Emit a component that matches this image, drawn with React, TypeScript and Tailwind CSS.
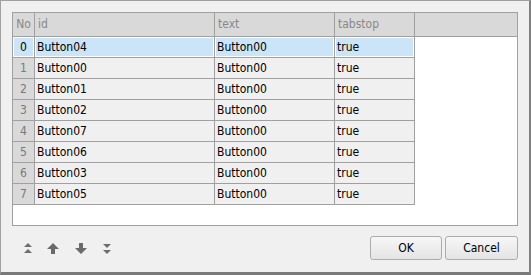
import React from "react";

const rows = [
  { no: 0, id: "Button04", text: "Button00", tab: "true", sel: true },
  { no: 1, id: "Button00", text: "Button00", tab: "true" },
  { no: 2, id: "Button01", text: "Button00", tab: "true" },
  { no: 3, id: "Button02", text: "Button00", tab: "true" },
  { no: 4, id: "Button07", text: "Button00", tab: "true" },
  { no: 5, id: "Button06", text: "Button00", tab: "true" },
  { no: 6, id: "Button03", text: "Button00", tab: "true" },
  { no: 7, id: "Button05", text: "Button00", tab: "true" },
];

const font = { fontFamily: '"DejaVu Sans Condensed", "DejaVu Sans", "Liberation Sans", sans-serif' };

function Row({ r }: { r: (typeof rows)[number] }) {
  const selCell = r.sel ? "bg-[#cce4f7] shadow-[inset_0_0_0_1px_#ffffff]" : "bg-[#f0f0f0]";
  return (
    <div className="flex h-[21px] text-[12px] leading-[20px]">
      <div
        className={`w-[22px] shrink-0 border-r border-b border-[#a0a0a0] text-center ${
          r.sel ? "bg-[#cce4f7] shadow-[inset_0_0_0_1px_#ffffff] text-black" : "bg-[#d9d9d9] text-[#7a7a7a]"
        }`}
      >
        {r.no}
      </div>
      <div className={`w-[180px] shrink-0 border-r border-b border-[#a0a0a0] pl-[2px] text-black ${selCell}`}>{r.id}</div>
      <div className={`w-[120px] shrink-0 border-r border-b border-[#a0a0a0] pl-[2px] text-black ${selCell}`}>{r.text}</div>
      <div className={`w-[80px] shrink-0 border-r border-b border-[#a0a0a0] pl-[2px] text-black ${selCell}`}>{r.tab}</div>
    </div>
  );
}

function Icon({ kind }: { kind: "top" | "up" | "down" | "bottom" }) {
  if (kind === "top")
    return (
      <svg width="10" height="11" viewBox="0 0 10 11">
        <polygon points="5,0 9,4 1,4" fill="#6e6e6e" />
        <polygon points="5,6 9,10 1,10" fill="#6e6e6e" />
      </svg>
    );
  if (kind === "bottom")
    return (
      <svg width="10" height="11" viewBox="0 0 10 11">
        <polygon points="1,1 9,1 5,5" fill="#6e6e6e" />
        <polygon points="1,7 9,7 5,11" fill="#6e6e6e" />
      </svg>
    );
  if (kind === "up")
    return (
      <svg width="12" height="11" viewBox="0 0 12 11">
        <polygon points="6,0 12,6 8,6 8,11 4,11 4,6 0,6" fill="#6a6a6a" />
      </svg>
    );
  return (
    <svg width="12" height="11" viewBox="0 0 12 11">
      <polygon points="4,0 8,0 8,5 12,5 6,11 0,5 4,5" fill="#6a6a6a" />
    </svg>
  );
}

export default function App() {
  return (
    <div
      style={font}
      className="w-[531px] h-[275px] bg-[#f0f0f0] border-l border-t border-[#a0a0a0] border-r-2 border-r-[#808080] border-b-[3px] border-b-[#7a7a7a] pt-[11px] pl-[11px] pr-[11px] flex flex-col"
    >
      <div className="w-[506px] h-[214px] border border-[#a0a0a0] bg-white flex flex-col">
        <div className="flex h-[24px] bg-[#d9d9d9] border-b border-[#a0a0a0] text-[12px] leading-[23px] text-[#888888]">
          <div className="w-[22px] shrink-0 border-r border-[#a0a0a0] text-center">No</div>
          <div className="w-[180px] shrink-0 border-r border-[#a0a0a0] pl-[3px]">id</div>
          <div className="w-[120px] shrink-0 border-r border-[#a0a0a0] pl-[3px]">text</div>
          <div className="w-[80px] shrink-0 border-r border-[#a0a0a0] pl-[3px]">tabstop</div>
          <div className="flex-1" />
        </div>
        {rows.map((r) => (
          <Row key={r.no} r={r} />
        ))}
      </div>
      <div className="flex items-center mt-[10px] h-[24px]">
        <div className="flex items-center pl-[11px] gap-[0px]">
          <div className="w-[10px] flex justify-center"><Icon kind="top" /></div>
          <div className="w-[14px]" />
          <div className="w-[12px] flex justify-center"><Icon kind="up" /></div>
          <div className="w-[16px]" />
          <div className="w-[12px] flex justify-center"><Icon kind="down" /></div>
          <div className="w-[15px]" />
          <div className="w-[10px] flex justify-center"><Icon kind="bottom" /></div>
        </div>
        <div className="flex-1" />
        <div className="flex gap-[3px]">
          <button className="w-[72px] h-[24px] border border-[#acacac] rounded-[3px] bg-gradient-to-b from-[#f7f7f7] to-[#e4e4e4] text-[12px] text-black">
            OK
          </button>
          <button className="w-[73px] h-[24px] border border-[#acacac] rounded-[3px] bg-gradient-to-b from-[#f7f7f7] to-[#e4e4e4] text-[12px] text-black">
            Cancel
          </button>
        </div>
      </div>
    </div>
  );
}
